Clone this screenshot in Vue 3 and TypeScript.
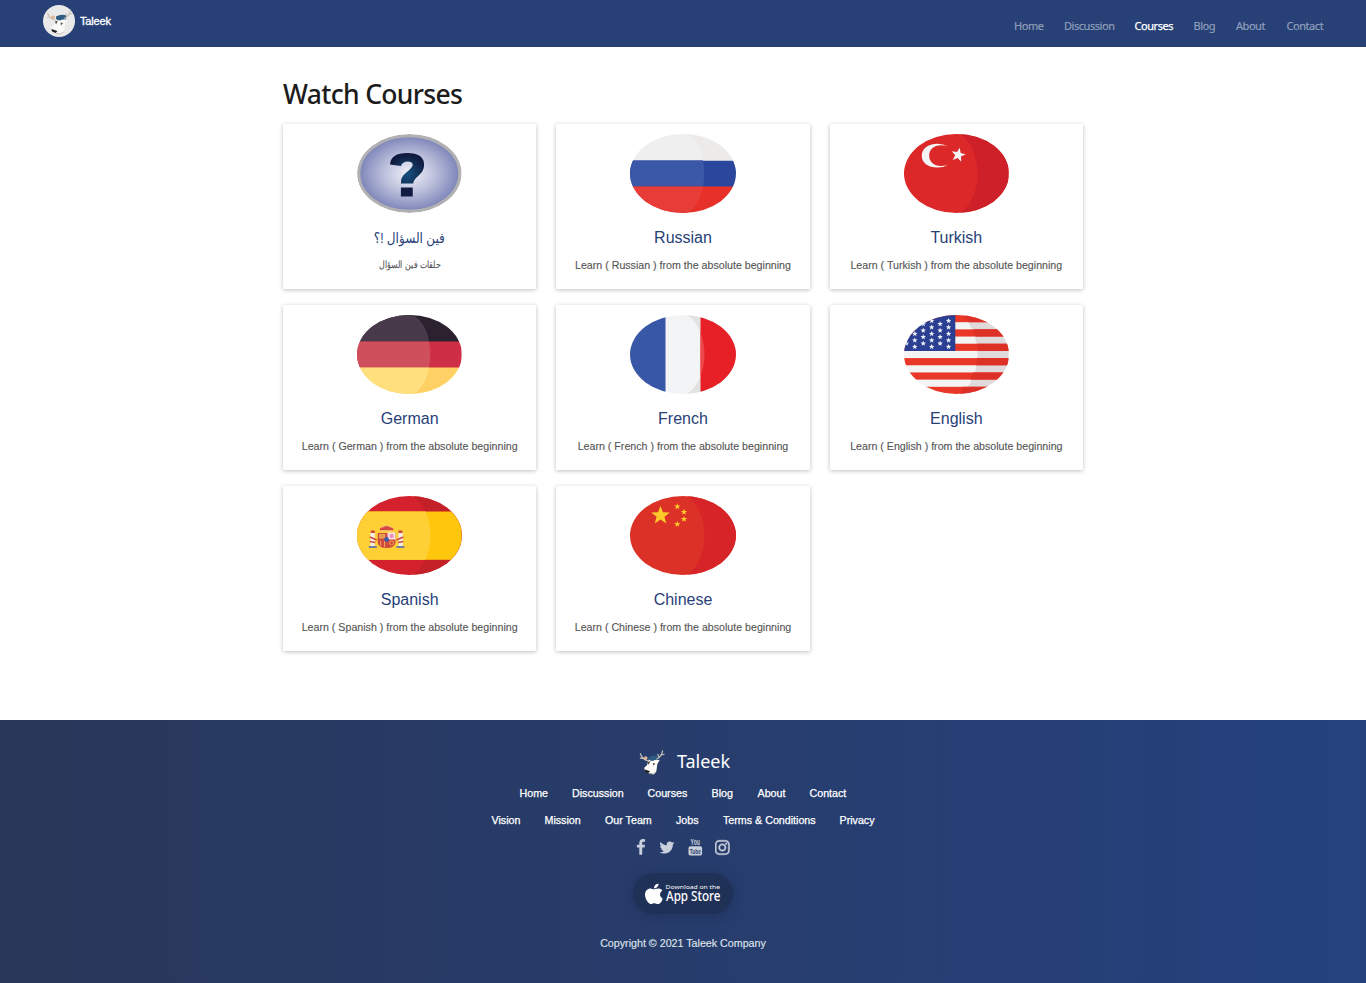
<script setup lang="ts">
interface Link { label: string; width: number; active?: boolean }
interface Course { id: string; title: string; text: string; flagWidth: number; arabic?: boolean }

const nav: Link[] = [
  { label: 'Home', width: 29 },
  { label: 'Discussion', width: 49.5 },
  { label: 'Courses', width: 38, active: true },
  { label: 'Blog', width: 21.5 },
  { label: 'About', width: 29.5 },
  { label: 'Contact', width: 37 },
]

const learn = (name: string) => `Learn ( ${name} ) from the absolute beginning`
const language = (title: string, flagWidth: number): Course =>
  ({ id: title.toLowerCase(), title, text: learn(title), flagWidth })

const courses: Course[] = [
  { id: 'question', title: 'فين السؤال !؟', text: 'حلقات فين السؤال', flagWidth: 104.6, arabic: true },
  language('Russian', 106),
  language('Turkish', 104.6),
  language('German', 104.6),
  language('French', 106),
  language('English', 104.6),
  language('Spanish', 104.6),
  language('Chinese', 106),
]

const footerMain: Link[] = [
  { label: 'Home', width: 28.5 },
  { label: 'Discussion', width: 51.5 },
  { label: 'Courses', width: 40 },
  { label: 'Blog', width: 22 },
  { label: 'About', width: 28 },
  { label: 'Contact', width: 37 },
]
const footerMore: Link[] = [
  { label: 'Vision', width: 29 },
  { label: 'Mission', width: 36.5 },
  { label: 'Our Team', width: 47 },
  { label: 'Jobs', width: 23 },
  { label: 'Terms & Conditions', width: 92.5 },
  { label: 'Privacy', width: 35 },
]

function star(cx: number, cy: number, r: number, turn = 0): string {
  const pts: string[] = []
  for (let i = 0; i < 10; i++) {
    const radius = i % 2 ? r * 0.42 : r
    const a = ((i * 36 - 90 + turn) * Math.PI) / 180
    pts.push(`${(cx + radius * Math.cos(a)).toFixed(2)},${(cy + radius * Math.sin(a)).toFixed(2)}`)
  }
  return pts.join(' ')
}

const cantonStars: string[] = []
for (let c = 0; c < 6; c++) {
  const even = c % 2 === 1
  for (let r = 0; r < (even ? 5 : 4); r++) {
    cantonStars.push(star(2.4 + c * 8.55, (even ? 5.8 : 9) + r * 6.5, 2.9))
  }
}

const chinaStars = [star(30.5, 19.5, 9.8), star(47.3, 10.5, 3.3), star(54, 16, 3.3), star(54, 23.2, 3.3), star(47.3, 28.2, 3.3)]
const sheen = 'M0 0H57C67 6 74.5 22 74.5 39.5S67 73 57 79H0Z'
const shade = 'M57 0C67 6 74.5 22 74.5 39.5S67 73 57 79H106V0Z'
const palette: Record<string, string[]> = {
  russian: ['#efefef', '#2b479d', '#e73027'],
  german: ['#2c212e', '#ce2f46', '#ffd064'],
}
</script>

<template>
  <div class="page">
    <svg class="defs" width="0" height="0">
      <symbol id="deer" viewBox="0 0 32 32">
        <path d="M13 11.500Q18 8.500 23.500 10.500L23 15.500L13 16Z" fill="#2f5b80" />
        <path d="M13 14Q16 16.500 19.500 14.500L24.500 14.500L22 18.500L21.500 22.500L21 26L18.500 29.500L15.500 28L12.500 27.500L9 26L8.500 22.500L11.500 19.500Z" fill="#fbfbfa" />
        <path d="M12.500 15.500Q6.500 13.500 4.500 8M8.500 13L4.500 12.500M21.500 13.500Q26 11.500 27.500 5M24 12L22.500 8.500M25.800 9.500L29 8.500" fill="none" stroke="#c9c5bb" stroke-width="1.200" stroke-linecap="round" />
        <circle cx="10" cy="12.500" r="1.900" fill="#dfb598" />
        <path d="M12 16.500L15 15.500L13 19.500ZM17.500 17.500L20 18L18 20.500Z" fill="#554c40" />
        <path d="M8.500 24L14.500 26L12.500 28L9 26.500Z" fill="#24211f" />
        <path d="M13 28.200Q17.500 30.500 20.500 27" fill="none" stroke="#b5b0a4" stroke-width=".8" />
      </symbol>
    </svg>

    <header class="topbar">
      <a class="brand">
        <span class="brand-disc"><svg width="32" height="32"><use href="#deer" /></svg></span>
        <span class="brand-name">Taleek</span>
      </a>
      <nav class="nav">
        <a v-for="l in nav" :key="l.label" :class="{ active: l.active }" :style="{ width: l.width + 'px' }">{{ l.label }}</a>
      </nav>
    </header>

    <main class="content">
      <h1>Watch Courses</h1>
      <div class="grid">
        <article v-for="c in courses" :key="c.id" class="card" :class="{ arabic: c.arabic }">
          <svg class="flag" viewBox="0 0 106 79" preserveAspectRatio="none" :style="{ width: c.flagWidth + 'px' }">
            <template v-if="c.id === 'question'">
              <defs>
                <radialGradient id="orb"><stop offset="0" stop-color="#f2f3fa" /><stop offset=".5" stop-color="#bcc0dc" /><stop offset="1" stop-color="#7c84b8" /></radialGradient>
                <radialGradient id="ink" gradientUnits="userSpaceOnUse" cx="51" cy="40" r="20"><stop offset="0" stop-color="#15507f" /><stop offset="1" stop-color="#111a3e" /></radialGradient>
              </defs>
              <ellipse cx="53" cy="39.500" rx="51.200" ry="37.900" fill="url(#orb)" stroke="#b1b1b3" stroke-width="3.200" />
              <path d="M33.500 30.500Q34 19 51 19Q68 19 68 31Q68 37 62 42Q57 46 57 49.500H44.500Q44 43 50 38.500Q56.500 33.500 56.500 30.500Q56 27.500 51.500 27.500Q46 27.500 44.500 32Z" fill="url(#ink)" />
              <rect x="44.500" y="53.500" width="12" height="9" fill="#111c42" />
            </template>
            <template v-else-if="palette[c.id]">
              <rect width="106" height="27" :fill="palette[c.id][0]" />
              <rect y="26.500" width="106" height="26.500" :fill="palette[c.id][1]" />
              <rect y="52.500" width="106" height="26.500" :fill="palette[c.id][2]" />
              <template v-if="c.id === 'german'">
                <path d="M0 0H57Q70 8 73 26.500H0Z" fill="#493a4b" />
                <path d="M0 26.500H73Q75.500 39 73 52.500H0Z" fill="#d04f5c" />
                <path d="M0 52.500H73Q69 73 57 79H0Z" fill="#ffdf7e" />
              </template>
              <template v-else>
                <path d="M0 26.500H73Q75.500 39 73 52.500H0Z" fill="#3a58a7" />
                <path d="M0 52.500H73Q69 73 57 79H0Z" fill="#e73c37" />
                <path d="M57 0Q70 8 73 26.500H106V0Z" fill="#ecebea" />
              </template>
            </template>
            <template v-else-if="c.id === 'turkish'">
              <rect width="106" height="79" fill="#dc2829" />
              <path :d="shade" fill="#ce2028" />
              <path d="M44.500 12.500Q40 9.800 34 9.800C24 9.800 18 15 18 21.700S24 33.500 34 33.500Q40 33.500 44.500 31Q41 32 37.500 32C30 32 25.500 27.500 25.500 21.700S30 11.300 37.500 11.300Q41 11.300 44.500 12.500Z" fill="#f5f5f5" />
              <polygon :points="star(55, 21, 7.500, 12)" fill="#f5f5f5" />
            </template>
            <template v-else-if="c.id === 'french'">
              <rect width="106" height="79" fill="#f3f4f5" />
              <path :d="shade" fill="#e2e2e2" />
              <rect width="35.500" height="79" fill="#3857a6" />
              <rect x="70.500" width="35.500" height="79" fill="#e71f27" />
              <path d="M70.500 17Q78.500 40 70.500 61Z" fill="#ec484c" />
            </template>
            <template v-else-if="c.id === 'english'">
              <rect width="106" height="79" fill="#f4f4f4" />
              <path :d="shade" fill="#e6e6e7" />
              <rect v-for="n in 6" :key="n" :y="(n - 1) * 14.360" width="106" height="7.180" fill="#e93728" />
              <path :d="shade" fill="#a02020" opacity=".06" />
              <path v-for="n in 6" :key="'s' + n" :d="`M${[62, 71, 74.5, 74, 70, 60][n - 1]} ${(n - 1) * 14.36}H106v7.180H${[66, 73, 75, 73, 67, 57][n - 1]}Z`" fill="#dd3127" />
              <rect width="52" height="36" fill="#2a3f92" />
              <polygon v-for="(p, i) in cantonStars" :key="i" :points="p" fill="#eef0f7" />
            </template>
            <template v-else-if="c.id === 'spanish'">
              <rect width="106" height="79" fill="#d3212d" />
              <path :d="shade" fill="#c32127" />
              <rect y="15.500" width="106" height="48.300" fill="#fec60d" />
              <path d="M0 15.500H69.500Q79.500 39.500 69.500 63.800H0Z" fill="#ffd036" />
              <rect x="13.500" y="37" width="4.500" height="13" fill="#f2ece4" />
              <rect x="42" y="37" width="4.500" height="13" fill="#f2ece4" />
              <path d="M14 34.500H18V37H14ZM42 34.500H46V37H42Z" fill="#c9483e" />
              <path d="M13 41L20 44M13 45.500L18.500 46.500M47 41L40 44M47 45.500L41.500 46.500" stroke="#d04a42" stroke-width="1.600" />
              <path d="M12 50H20V52H12ZM40 50H48V52H40Z" fill="#74809b" />
              <path d="M21 37H39V47Q38 52 30 52Q22 52 21 47Z" fill="#cf493f" />
              <rect x="31" y="36.500" width="8" height="7" fill="#f3e1e4" />
              <circle cx="35" cy="40" r="2.200" fill="#ef8fc2" />
              <path d="M23 38.500H28V42H23ZM24 45V50M28 45V51" fill="#e3934a" stroke="#edb85a" stroke-width=".9" />
              <circle cx="35" cy="47" r="2" fill="none" stroke="#efa846" />
              <circle cx="30" cy="43.500" r="2.400" fill="#3b5aaa" />
              <path d="M23 34.500Q23 30 30 30Q37 30 37 34.500Z" fill="#d5473f" />
              <path d="M25 31.500Q30 27.500 35 31.500M23.500 34.700H36.500" fill="none" stroke="#f2c27d" stroke-width="1.100" />
            </template>
            <template v-else>
              <rect width="106" height="79" fill="#dc3127" />
              <path :d="shade" fill="#d62428" />
              <polygon v-for="(p, i) in chinaStars" :key="i" :points="p" fill="#fcca29" />
            </template>
          </svg>
          <h2>{{ c.title }}</h2>
          <p>{{ c.text }}</p>
        </article>
      </div>
    </main>

    <footer class="footer">
      <div class="footer-brand">
        <svg width="31" height="31"><use href="#deer" /></svg>
        <span>Taleek</span>
      </div>
      <div class="links">
        <a v-for="l in footerMain" :key="l.label" :style="{ width: l.width + 'px' }">{{ l.label }}</a>
      </div>
      <div class="links">
        <a v-for="l in footerMore" :key="l.label" :style="{ width: l.width + 'px' }">{{ l.label }}</a>
      </div>
      <div class="social">
        <svg width="9.700" height="17" viewBox="384 0 1024 1792"><path d="M1343 12v264h-157q-86 0-116 36t-30 108v189h293l-39 296h-254v759h-306v-759h-255v-296h255v-218q0-186 104-288.500t277-102.500q147 0 228 12z" /></svg>
        <svg width="15.800" height="17" viewBox="64 0 1664 1792"><path d="M1684 408q-67 98-162 167 1 14 1 42 0 130-38 259.500t-115.500 248.500-184.500 210.500-258 146-323 54.500q-271 0-496-145 35 4 78 4 225 0 401-138-105-2-188-64.500t-114-159.500q33 5 61 5 43 0 85-11-112-23-185.500-111.500t-73.500-205.500v-4q68 38 146 41-66-44-105-115t-39-154q0-88 44-163 121 149 294.500 238.500t371.500 99.500q-8-38-8-74 0-134 94.500-228.500t228.500-94.500q140 0 236 102 109-21 205-78-37 115-142 178 93-10 186-50z" /></svg>
        <svg class="tube" width="14.600" height="17" viewBox="0 0 14.600 17">
          <text x="2.600" y="6.300" font-size="8.500" textLength="9.400" lengthAdjust="spacingAndGlyphs">You</text>
          <rect x=".5" y="7.300" width="13.600" height="9.300" rx="1.800" />
          <text class="cut" x="1.800" y="14.800" font-size="7.500" textLength="11" lengthAdjust="spacingAndGlyphs">Tube</text>
        </svg>
        <svg class="gram" width="14.600" height="17" viewBox="128 0 1536 1792"><path d="M1152 896q0-106-75-181t-181-75-181 75-75 181 75 181 181 75 181-75 75-181zm138 0q0 164-115 279t-279 115-279-115-115-279 115-279 279-115 279 115 115 279zm108-410q0 38-27 65t-65 27-65-27-27-65 27-65 65-27 65 27 27 65zm-502-220q-7 0-76.500-.5t-105.500 0-96.500 3-103 10-71.500 18.500q-50 20-88 58t-58 88q-11 29-18.500 71.500t-10 103-3 96.500 0 105.500.5 76.500-.5 76.500 0 105.500 3 96.500 10 103 18.500 71.500q20 50 58 88t88 58q29 11 71.500 18.500t103 10 96.500 3 105.500 0 76.500-.5 76.500.5 105.500 0 96.500-3 103-10 71.500-18.500q50-20 88-58t58-88q11-29 18.500-71.500t10-103 3-96.500 0-105.500-.5-76.500.5-76.500 0-105.500-3-96.500-10-103-18.500-71.500q-20-50-58-88t-88-58q-29-11-71.500-18.500t-103-10-96.500-3-105.500 0-76.500.5zm768 630q0 229-5 317-10 208-124 322t-322 124q-88 5-317 5t-317-5q-208-10-322-124t-124-322q-5-88-5-317t5-317q10-208 124-322t322-124q88-5 317-5t317 5q208 10 322 124t124 322q5 88 5 317z" /></svg>
      </div>
      <a class="store">
        <svg width="100" height="41" viewBox="0 0 100 41">
          <svg x="12" y="10.500" width="17.500" height="20.500" viewBox="4 32 365 448" preserveAspectRatio="none"><path d="M318.700 268.700c-.2-36.700 16.400-64.400 50-84.800-18.800-26.900-47.200-41.700-84.700-44.600-35.500-2.800-74.300 20.700-88.500 20.700-15 0-49.400-19.700-76.400-19.700C63.300 141.200 4 184.800 4 273.500q0 39.300 14.400 81.200c12.800 36.700 59 126.700 107.200 125.200 25.200-.6 43-17.900 75.800-17.900 31.800 0 48.300 17.900 76.400 17.900 48.600-.7 90.400-82.500 102.600-119.300-65.200-30.700-61.700-90-61.700-91.900zm-56.600-164.200c27.300-32.400 24.800-61.900 24-72.500-24.100 1.400-52 16.400-67.900 34.900-17.500 19.800-27.800 44.300-25.600 71.900 26.100 2 49.900-11.400 69.500-34.300z" /></svg>
          <text x="32.500" y="15.800" font-size="6" textLength="54.500" lengthAdjust="spacingAndGlyphs">Download on the</text>
          <text x="33" y="27.800" font-size="13.500" font-weight="500" textLength="54.500" lengthAdjust="spacingAndGlyphs">App Store</text>
        </svg>
      </a>
      <p class="copyright">Copyright © 2021 Taleek Company</p>
    </footer>
  </div>
</template>

<style>
body { margin: 0; background: #fff; }
</style>

<style scoped>
.page { width: 1366px; height: 983px; overflow: hidden; display: flex; flex-direction: column; font-family: "Liberation Sans", Arial, sans-serif; }
.defs { position: absolute; }
.topbar { box-sizing: border-box; height: 47px; flex: none; padding: 0 42.500px 0 43px; display: flex; justify-content: space-between; background: #274177; }
.brand { display: flex; align-items: flex-start; gap: 5px; padding-top: 5px; }
.brand-disc { width: 32px; height: 32px; border-radius: 50%; background: #e9e9e9; }
.brand-disc svg { display: block; }
.brand-name { color: #fff; font-size: 11px; line-height: 32px; letter-spacing: -.15px; -webkit-text-stroke: .3px #fff; }
.nav { display: flex; gap: 21px; padding-top: 5px; font: 11px/41px "Noto Sans", sans-serif; letter-spacing: -.45px; color: #93a0bb; -webkit-text-stroke: .15px #93a0bb; }
.nav a { white-space: nowrap; }
.nav .active { color: #fff; -webkit-text-stroke: .25px #fff; }
.content { width: 800px; margin: 0 auto; height: 673px; flex: none; }
h1 { margin: 0; padding-top: 28px; height: 49px; font: 500 26.500px/38px "Noto Sans", sans-serif; letter-spacing: -.68px; color: #1c1c1c; }
.grid { display: grid; grid-template-columns: repeat(3, 1fr); column-gap: 20px; row-gap: 16px; }
.card { height: 165px; box-sizing: border-box; padding-top: 10px; display: flex; flex-direction: column; align-items: center; background: #fff; box-shadow: 0 1px 4px rgba(0, 0, 0, .26); border-radius: 1px; }
.flag { height: 79px; flex: none; border-radius: 50%; overflow: hidden; display: block; }
h2 { margin: 15px 0 0; font-size: 16px; line-height: 20px; font-weight: 400; color: #274177; }
.card p { margin: 8px 0 0; font-size: 10.650px; line-height: 18px; color: #555; white-space: nowrap; -webkit-text-stroke: .12px #555; }
.arabic h2 { font-family: "Liberation Sans", "DejaVu Sans", sans-serif; font-size: 14px; transform: scaleX(.86); }
.card.arabic p { font-size: 10px; transform: scaleX(.79); }
.footer { height: 263px; flex: none; display: flex; flex-direction: column; align-items: center; background: linear-gradient(to right, #293759, #25427f); }
.footer-brand { display: flex; align-items: center; height: 31px; margin-top: 26px; gap: 10px; color: #fff; font: 18px/31px "Noto Sans", sans-serif; }
.footer-brand svg { flex: none; }
.links { display: flex; gap: 24px; height: 27px; align-items: center; color: #fff; font-size: 10.700px; -webkit-text-stroke: .25px #fff; }
.footer-brand + .links { margin-top: 2px; }
.links a { white-space: nowrap; }
.social { display: flex; gap: 13px; height: 17px; margin-top: 6px; fill: #c9cfdc; }
.gram { stroke: #c9cfdc; stroke-width: 50; }
.tube { overflow: visible; }
.tube text { font-family: "Liberation Sans", sans-serif; font-weight: 700; }
.tube .cut { fill: #283d6c; }
.store { width: 100px; height: 41px; margin-top: 17px; border-radius: 21px; background: #1f3157; box-shadow: 0 2px 12px rgba(20, 35, 70, .35); fill: #fff; font-family: "Noto Sans", sans-serif; }
.store svg { display: block; }
.copyright { margin: 20px 0 0; color: #dfe3eb; font-size: 10.700px; line-height: 18px; -webkit-text-stroke: .15px #dfe3eb; }
</style>
